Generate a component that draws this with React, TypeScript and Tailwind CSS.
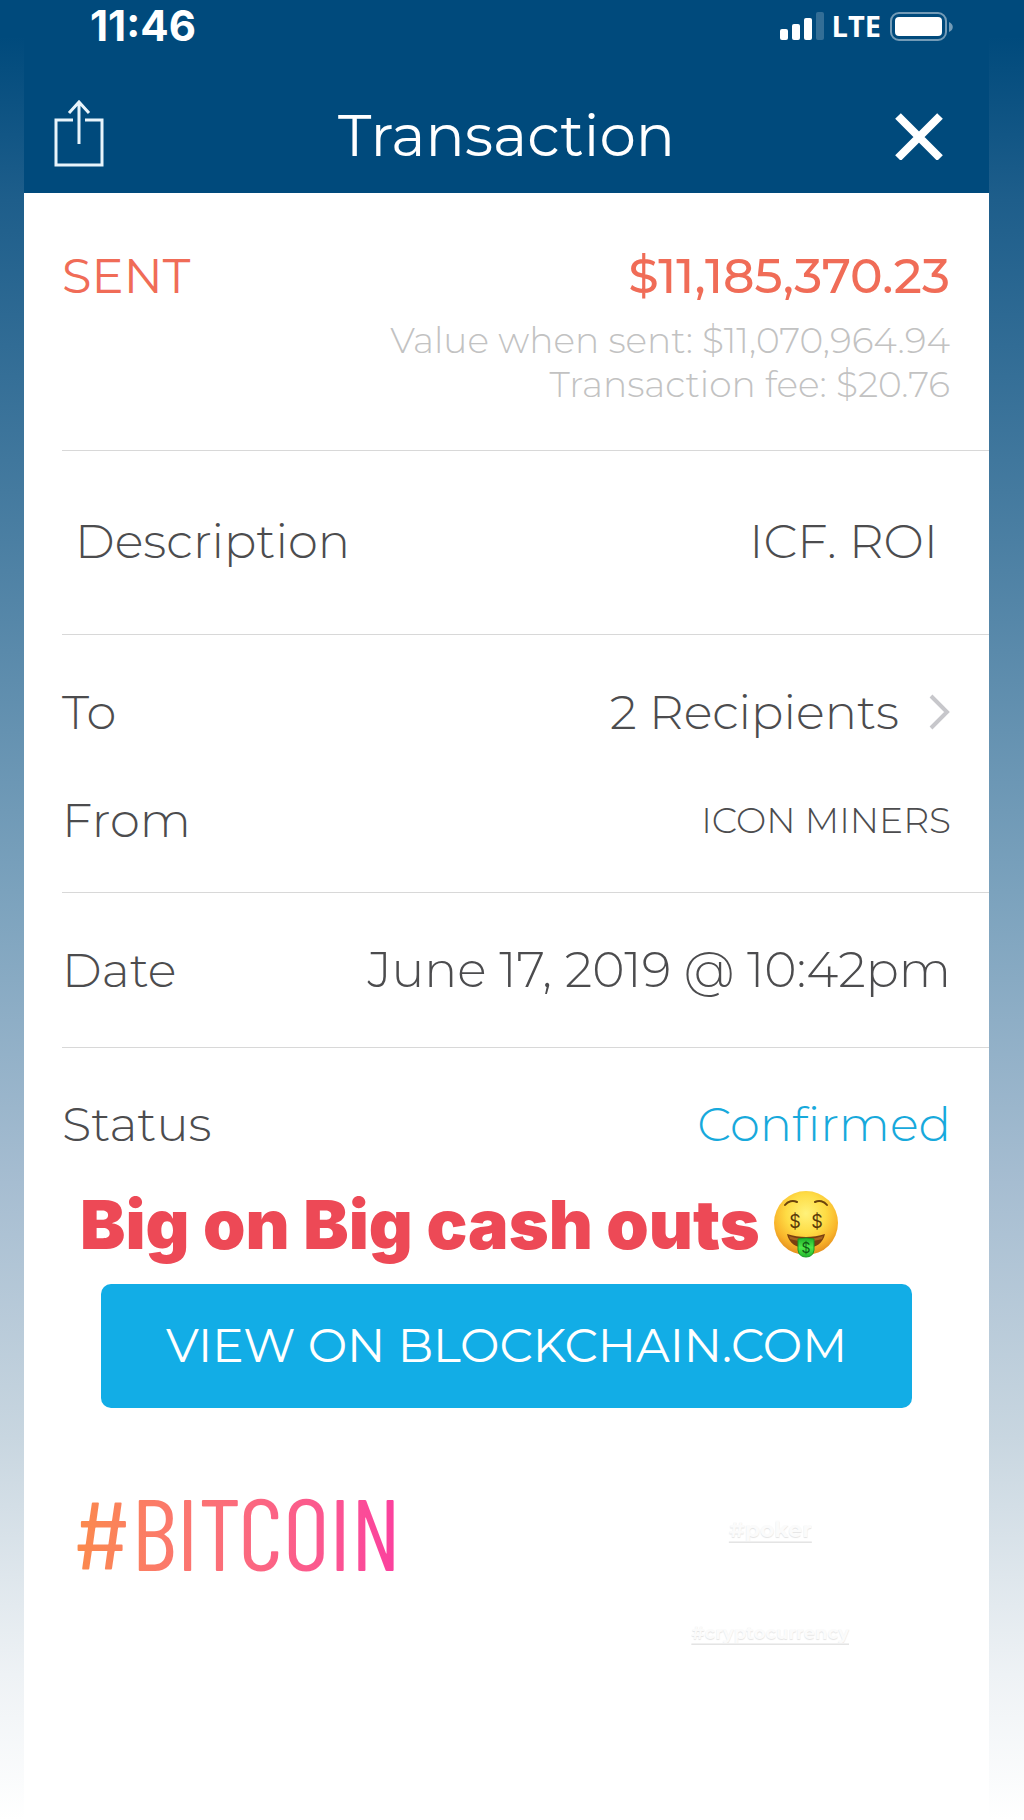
import React from "react";

function StatusBar() {
  return (
    <div className="flex h-[52px] items-start justify-between pt-[3px] pr-9 pl-[66px] font-['Inter',sans-serif] text-white">
      <span className="text-[42px] leading-[46px] font-bold">11:46</span>
      <div className="flex h-[46px] items-center gap-2">
        <svg className="h-7 w-11" viewBox="0 0 44 28" fill="currentColor" aria-label="Signal strength">
          <rect x="0" y="17" width="8" height="11" rx="2" />
          <rect x="12" y="12" width="8" height="16" rx="2" />
          <rect x="24" y="6" width="8" height="22" rx="2" />
          <rect x="36" y="0" width="8" height="28" rx="2" opacity="0.2" />
        </svg>
        <span className="font-['Open_Sans',sans-serif] text-[29px] leading-9 font-bold">LTE</span>
        <svg className="h-8 w-16" viewBox="0 0 64 32" fill="none" aria-label="Battery">
          <rect x="2" y="3" width="55" height="27" rx="8" stroke="#fff" strokeOpacity="0.45" strokeWidth="2" />
          <rect x="6" y="7" width="47" height="19" rx="4" fill="#fff" />
          <path d="M60 12c5 2 5 8 0 10z" fill="#fff" fillOpacity="0.45" />
        </svg>
      </div>
    </div>
  );
}

function Header() {
  return (
    <header className="bg-[#004a7c] text-white">
      <StatusBar />
      <div className="grid h-[141px] grid-cols-[1fr_auto_1fr] items-center pt-[26px]">
        <button type="button" aria-label="Share" className="ml-7 justify-self-start">
          <svg className="h-[72px] w-[54px]" viewBox="0 0 54 72" fill="none" stroke="#e8f4fb" strokeWidth="3">
            <path d="M21 20H4v45h46V20H33" />
            <path d="M27 44V3M17 13L27 2l10 11" />
          </svg>
        </button>
        <h1 className="text-[58px] leading-[72px] font-normal">Transaction</h1>
        <button type="button" aria-label="Close" className="mr-[46px] justify-self-end">
          <svg className="size-12" viewBox="0 0 48 48" stroke="#fff" strokeWidth="8">
            <path d="M3 4l42 42M45 4L3 46" />
          </svg>
        </button>
      </div>
    </header>
  );
}

function Row({ label, children }: { label: string; children: React.ReactNode }) {
  return (
    <div className="flex items-center justify-between gap-4">
      <dt>{label}</dt>
      <dd className="flex items-center">{children}</dd>
    </div>
  );
}

function MoneyFace() {
  return (
    <svg className="size-[68px]" viewBox="0 0 68 68" role="img" aria-label="Money-mouth face">
      <defs>
        <radialGradient id="face" cx="0.5" cy="0.35" r="0.68">
          <stop offset="0" stopColor="#fff27a" />
          <stop offset="0.45" stopColor="#fedc45" />
          <stop offset="0.75" stopColor="#f9b52b" />
          <stop offset="1" stopColor="#e0861c" />
        </radialGradient>
        <linearGradient id="tongue" x1="0" y1="0" x2="0" y2="1">
          <stop offset="0" stopColor="#1fae2a" />
          <stop offset="0.5" stopColor="#4fea4a" />
          <stop offset="1" stopColor="#22b52d" />
        </linearGradient>
      </defs>
      <circle cx="34" cy="33" r="32" fill="url(#face)" />
      <path d="M13 15c3-4 8-5 12-3M43 12c4-2 9-1 12 3" fill="none" stroke="#6b430c" strokeWidth="2" strokeLinecap="round" />
      <path d="M15 44c12 4 26 4 38 0-2 9-9 14-19 14S17 53 15 44z" fill="#7a3f10" />
      <path d="M17 46c11 4 23 4 34 0l-1 3c-10 3-22 3-32 0z" fill="#a5651f" />
      <path d="M26 49q8-2 16 0v11q-1 7-8 7t-8-7z" fill="url(#tongue)" stroke="#179a22" strokeWidth="1" />
      <g fill="#5a3a08" fontFamily="Inter, sans-serif" fontWeight="400" textAnchor="middle">
        <text x="23" y="38" fontSize="18">$</text>
        <text x="45" y="38" fontSize="18">$</text>
        <text x="34" y="63" fontSize="14" fill="#0f5a14">$</text>
      </g>
    </svg>
  );
}

export default function App() {
  return (
    <div className="min-h-screen bg-[linear-gradient(#004a7c_0%,#004a7c_2%,#1e5e8b_11%,#447a9f_27%,#7ba2bd_49%,#a6bdd1_65%,#c8d6e0_79%,#eef2f5_92%,#ffffff_100%)] pr-[35px] pl-6 font-['Montserrat','Inter',sans-serif]">
      <div className="min-h-screen bg-white text-5xl leading-[56px] font-light text-[#4c4c4e]">
        <Header />
        <dl className="pl-[38px]">
          <div className="border-b border-[#d8d8d8] pt-[55px] pr-[39px] pb-11">
            <div className="flex items-center justify-between font-medium text-[#f06c57]">
              <dt className="font-normal">SENT</dt>
              <dd className="text-[49px]">$11,185,370.23</dd>
            </div>
            <dd className="mt-[14px] text-right text-4xl leading-[44px] text-[#c2c2c2]">
              <p>Value when sent: $11,070,964.94</p>
              <p>Transaction fee: $20.76</p>
            </dd>
          </div>
          <div className="border-b border-[#d8d8d8] pt-[62px] pr-[51px] pb-[65px] pl-[13px]">
            <Row label="Description">ICF. ROI</Row>
          </div>
          <div className="flex flex-col gap-[52px] border-b border-[#d8d8d8] pt-[49px] pr-[38px] pb-11">
            <Row label="To">
              <button type="button" className="flex items-center gap-7">
                2 Recipients
                <svg className="h-9 w-6" viewBox="0 0 24 36" fill="none" stroke="#c7c7cb" strokeWidth="4">
                  <path d="M4 2l16 16L4 34" />
                </svg>
              </button>
            </Row>
            <Row label="From">
              <span className="text-4xl leading-[56px]">ICON MINERS</span>
            </Row>
          </div>
          <div className="border-b border-[#d8d8d8] pt-[49px] pr-[38px] pb-[49px]">
            <Row label="Date">
              <span className="text-[49px]">June 17, 2019 @ 10:42pm</span>
            </Row>
          </div>
          <div className="pt-12 pr-[38px]">
            <Row label="Status">
              <span className="text-[#17a9dc]">Confirmed</span>
            </Row>
          </div>
        </dl>
        <p className="mt-9 flex items-center gap-3 pl-14 font-['Inter',sans-serif] text-[68px] leading-[72px] font-black text-[#ed4956]">
          Big on Big cash outs
          <MoneyFace />
        </p>
        <button
          type="button"
          className="mx-[77px] mt-6 flex h-[124px] w-[calc(100%-154px)] items-center justify-center rounded-[10px] bg-[#12ade6] text-[47px] font-normal text-white"
        >
          VIEW ON BLOCKCHAIN.COM
        </button>
        <div className="mt-[73px] flex items-start justify-between pr-[140px] pl-12">
          <a
            href="#bitcoin"
            className="bg-linear-to-r from-[#fb8a4a] to-[#fb3f9f] bg-clip-text font-['Barlow_Condensed','Oswald','Roboto_Condensed',sans-serif] text-[101px] leading-[100px] font-normal text-transparent"
          >
            #BITCOIN
          </a>
          <div className="flex flex-col items-center gap-[69px] pt-8 text-[22px] leading-[34px] font-bold text-[#fbfbfb] underline underline-offset-4 decoration-[#f0f0f0] decoration-1 text-shadow-[0_1px_1px_#e4e4e4]">
            <a href="#poker">#poker</a>
            <a href="#cryptocurrency" className="text-lg leading-[34px]">#cryptocurrency</a>
          </div>
        </div>
      </div>
    </div>
  );
}
